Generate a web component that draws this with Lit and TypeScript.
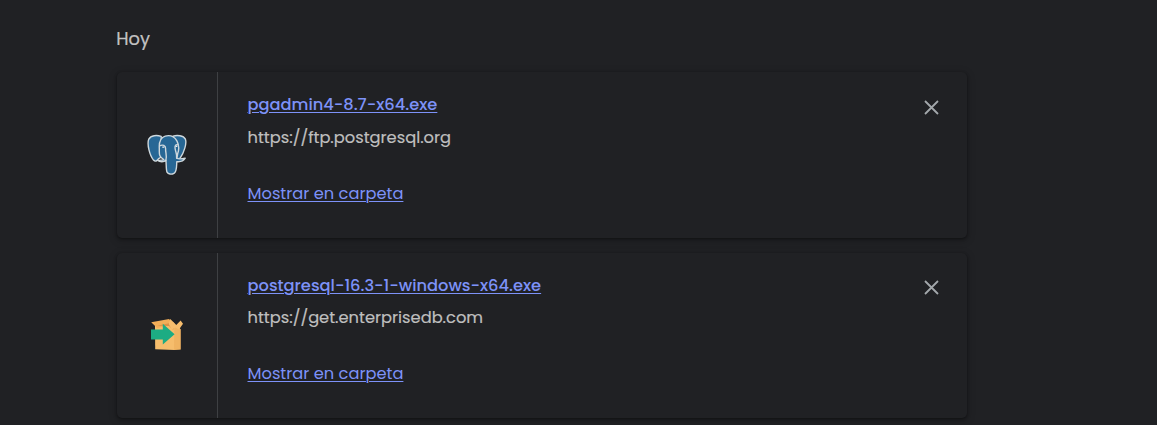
import { LitElement, html, css, svg } from "lit";
import { customElement, property } from "lit/decorators.js";

const elephant = svg`<svg viewBox="0 0 40 42" width="40" height="42">
  <g fill="#276795" stroke="#ced8dd" stroke-width="1.4" stroke-linejoin="round" stroke-linecap="round">
    <path d="M26 2.2C30 .9 36.4 1.4 38.4 5.2C40 9.3 37 18.7 33.1 24.2L26 27Z"/>
    <path d="M14.2 2.4C10 .9 3.8 1.1 1.8 5.1C-.3 10.4 2.8 21.7 6.5 26.1C8.3 28 10.1 27 11.6 24.7L14.5 23Z"/>
    <path d="M16.8 25.5C11.2 22.5 12.5 18.7 12.3 14.3C12 8.5 13 3.6 18.2 2.1C23.2.8 27.4 2.5 30 7.1C32 11 32.2 15.6 30.7 19.6L29.9 24.2C31.2 25.2 35.3 24.8 38.2 24.2C36.4 27 32.8 28 29.8 27.6C29.5 32 30.1 37.6 27 39.3C24.5 40.7 21.2 40.3 20 38.2C19 35.6 19.4 30 18.9 26.4C16.8 28.2 12.8 28.1 10.7 26.4C13.2 26.3 15.2 26.5 16.8 25.5Z"/>
    <path fill="none" d="M12.6 11.8C15.8 10.3 18.7 11.4 18.6 14.5C18.4 18.7 20.2 21.7 18.9 26.2M30.5 10.8C28.5 10.6 27.7 11.7 28.1 14.5C28.5 18 30.3 20 29.6 24.2"/>
  </g>
  <path d="M15.3 13.1h2M28.8 12.5h1.5" stroke="#eef2f4" stroke-width="1.2"/>
</svg>`;

const box = svg`<svg viewBox="0 0 40 42" width="40" height="42">
  <path fill="#f6bd6c" d="M8 12.5L29 12.3L33.7 16.3V36.5L27.5 37L8.2 36.2Z"/>
  <path fill="#e9a654" d="M29 12.3L27.3 17L27 37H28.4L33.7 36.5V16.3Z" opacity=".45"/>
  <path fill="#f2ae58" d="M4.2 9.2L22.2 6L25.7 11.8L10.2 15Z"/>
  <path fill="#db9246" d="M10 12.8L26.7 9.3L29 13.2L26 16.8L22 13Z"/>
  <path fill="#f7bd6d" d="M23.3 6.1L29.3 12.1L33.6 7.4L36 10.8L32 16.5L28.5 14.4L24.8 16.8L21.8 11Z"/>
  <path fill="#1dac83" d="M4 16.4H15.8V10.8L27.6 21.2L15.8 31.5V26.5H4Z"/>
</svg>`;

@customElement("download-card")
class DownloadCard extends LitElement {
  @property() name = "";
  @property() source = "";
  @property() kind = "";

  static styles = css`
    :host {
      display: flex;
      box-sizing: border-box;
      height: 166px;
      border-radius: 5px;
      background: #202124;
      box-shadow: 0 1px 3px rgba(0, 0, 0, 0.42), 0 2px 7px 2px rgba(0, 0, 0, 0.15);
    }
    :host([kind="box"]) { height: 165px; }
    .icon {
      box-sizing: border-box;
      width: 101px;
      display: flex;
      align-items: center;
      justify-content: center;
      border-right: 1px solid #3e4043;
    }
    :host([kind="box"]) .icon { padding: 0 1px 3px 0; }
    .icon svg { display: block; }
    .body {
      flex: 1;
      display: flex;
      flex-direction: column;
      align-items: flex-start;
      padding: 21px 0 0 29.5px;
      font-size: 16.25px;
      line-height: 24px;
      color: #bfbfbf;
    }
    a {
      color: #7d92f8;
      text-decoration: underline;
      text-decoration-thickness: 1px;
      text-underline-offset: 2px;
    }
    .name { font-weight: 500; }
    .source {
      margin-top: 9px;
      -webkit-text-stroke: 0.2px currentColor;
    }
    :host([kind="box"]) .source { margin-top: 8px; }
    .show { margin-top: 32px; }
    .close {
      margin: 28px 28px 0 0;
      width: 15px;
      height: 15px;
    }
    :host([kind="box"]) .close { margin-top: 27px; }
    .close svg { display: block; }
  `;

  render() {
    return html`
      <div class="icon">${this.kind === "box" ? box : elephant}</div>
      <div class="body">
        <a class="name">${this.name}</a>
        <span class="source">${this.source}</span>
        <a class="show">Mostrar en carpeta</a>
      </div>
      <div class="close">
        <svg viewBox="0 0 15 15" width="15" height="15">
          <path d="M1 1L14 14M14 1L1 14" stroke="#a3a8ab" stroke-width="1.8" />
        </svg>
      </div>
    `;
  }
}

@customElement("app-root")
class AppRoot extends LitElement {
  static styles = css`
    :host {
      display: block;
      box-sizing: border-box;
      height: 425px;
      overflow: hidden;
      padding: 26px 190px 0 117px;
      background: #202124;
      font-family: Poppins, Inter, sans-serif;
    }
    .day {
      height: 26px;
      line-height: 26px;
      font-size: 17.8px;
      color: #c2c2c2;
      margin: 0 0 20px -0.75px;
      -webkit-text-stroke: 0.2px currentColor;
    }
    .list {
      display: flex;
      flex-direction: column;
      gap: 15px;
    }
  `;

  render() {
    return html`
      <div class="day">Hoy</div>
      <div class="list">
        <download-card kind="elephant" name="pgadmin4-8.7-x64.exe" source="https://ftp.postgresql.org"></download-card>
        <download-card kind="box" name="postgresql-16.3-1-windows-x64.exe" source="https://get.enterprisedb.com"></download-card>
      </div>
    `;
  }
}
